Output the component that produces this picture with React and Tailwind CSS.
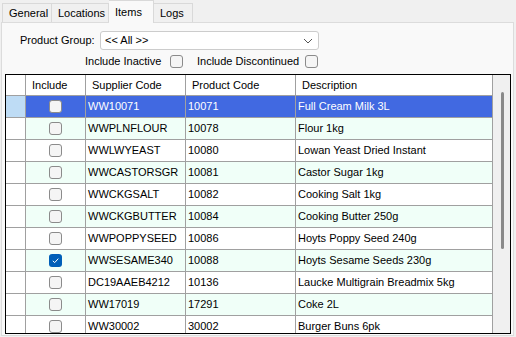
import React from "react";

const rows = [
  ["WW10071", "10071", "Full Cream Milk 3L", false],
  ["WWPLNFLOUR", "10078", "Flour 1kg", false],
  ["WWLWYEAST", "10080", "Lowan Yeast Dried Instant", false],
  ["WWCASTORSGR", "10081", "Castor Sugar 1kg", false],
  ["WWCKGSALT", "10082", "Cooking Salt 1kg", false],
  ["WWCKGBUTTER", "10084", "Cooking Butter 250g", false],
  ["WWPOPPYSEED", "10086", "Hoyts Poppy Seed 240g", false],
  ["WWSESAME340", "10088", "Hoyts Sesame Seeds 230g", true],
  ["DC19AAEB4212", "10136", "Laucke Multigrain Breadmix 5kg", false],
  ["WW17019", "17291", "Coke 2L", false],
  ["WW30002", "30002", "Burger Buns 6pk", false],
];

function Check({ checked }) {
  if (checked) {
    return (
      <div className="w-[13px] h-[13px] rounded-[3px] bg-[#005fb8] flex items-center justify-center">
        <svg width="9" height="9" viewBox="0 0 9 9">
          <path d="M1.8 4.8 L3.7 6.6 L7.3 2.6" fill="none" stroke="white" strokeWidth="1" />
        </svg>
      </div>
    );
  }
  return <div className="w-[13px] h-[13px] rounded-[3px] border border-[#8b8b8b] bg-[#f5f5f5]" />;
}

export default function App() {
  return (
    <div
      className="w-[516px] h-[337px] bg-[#f0f0f0] overflow-hidden text-[11px] text-black leading-none"
      style={{ fontFamily: '"Liberation Sans", Arial, sans-serif' }}
    >
      {/* tab strip */}
      <div className="flex items-end h-[22px] pl-[2px] relative z-10">
        <div className="h-[19px] w-[50px] pl-[6px] border border-b-0 border-[#d9d9d9] bg-[#f0f0f0] flex items-center">General</div>
        <div className="h-[19px] w-[57px] pl-[6px] border border-b-0 border-l-0 border-[#d9d9d9] bg-[#f0f0f0] flex items-center">Locations</div>
        <div className="h-[23px] w-[45px] pl-[6px] pt-[6px] border border-b-0 border-l-0 border-[#d9d9d9] bg-[#f9f9f9] mb-[-1px]">Items</div>
        <div className="h-[19px] w-[39px] pl-[6px] border border-b-0 border-l-0 border-[#d9d9d9] bg-[#f0f0f0] flex items-center">Logs</div>
      </div>
      {/* panel */}
      <div className="ml-[1px] w-[513px] h-[314px] border border-[#dcdcdc] bg-[#f9f9f9] pt-[8px]">
        <div className="flex items-center h-[19px]">
          <div className="ml-[18px] w-[80px]">Product Group:</div>
          <div className="w-[219px] h-[19px] bg-white border border-[#cccccc] rounded-[3px] flex items-center justify-between pl-[4px] pr-[5px]">
            <span>&lt;&lt; All &gt;&gt;</span>
            <svg width="10" height="6" viewBox="0 0 10 6">
              <path d="M1 1 L5 5 L9 1" fill="none" stroke="#555" strokeWidth="1" />
            </svg>
          </div>
        </div>
        <div className="flex items-center h-[13px] mt-[5px]">
          <span className="ml-[83px] w-[85px]">Include Inactive</span>
          <Check checked={false} />
          <span className="ml-[14px] w-[108px]">Include Discontinued</span>
          <Check checked={false} />
        </div>
        {/* grid */}
        <div className="ml-[3px] mt-[6px] w-[506px] h-[260px] border border-black flex overflow-hidden bg-white">
          <div className="flex-1 flex flex-col">
            <div className="flex h-[21px] shrink-0 border-b border-[#a0a0a0]">
              <div className="w-[20px] border-r border-[#a0a0a0]" />
              <div className="w-[60px] border-r border-[#a0a0a0] pl-[6px] flex items-center">Include</div>
              <div className="w-[100px] border-r border-[#a0a0a0] pl-[6px] flex items-center">Supplier Code</div>
              <div className="w-[110px] border-r border-[#a0a0a0] pl-[6px] flex items-center">Product Code</div>
              <div className="w-[197px] border-r border-[#a0a0a0] pl-[6px] flex items-center">Description</div>
            </div>
            {rows.map((r, i) => {
              const sel = i === 0;
              const bg = sel ? "bg-[#4169e1] text-white" : i % 2 === 1 ? "bg-[#f0fff8]" : "bg-white";
              return (
                <div key={i} className="flex h-[22px] shrink-0 border-b border-[#a0a0a0]">
                  <div className={"w-[20px] border-r border-[#a0a0a0] " + (sel ? "bg-[#bedcf5]" : "bg-white")} />
                  <div className={"w-[60px] border-r border-[#a0a0a0] flex items-center justify-center " + bg}>
                    <Check checked={r[3]} />
                  </div>
                  <div className={"w-[100px] border-r border-[#a0a0a0] pl-[2px] flex items-center " + bg}>{r[0]}</div>
                  <div className={"w-[110px] border-r border-[#a0a0a0] pl-[2px] flex items-center " + bg}>{r[1]}</div>
                  <div className={"w-[197px] border-r border-[#a0a0a0] pl-[2px] flex items-center " + bg}>{r[2]}</div>
                </div>
              );
            })}
          </div>
          <div className="w-[17px] bg-[#f0f0f0] relative">
            <div className="absolute left-[8px] top-[17px] w-[3px] h-[157px] rounded-full bg-[#8a8a8a]" />
          </div>
        </div>
      </div>
    </div>
  );
}
